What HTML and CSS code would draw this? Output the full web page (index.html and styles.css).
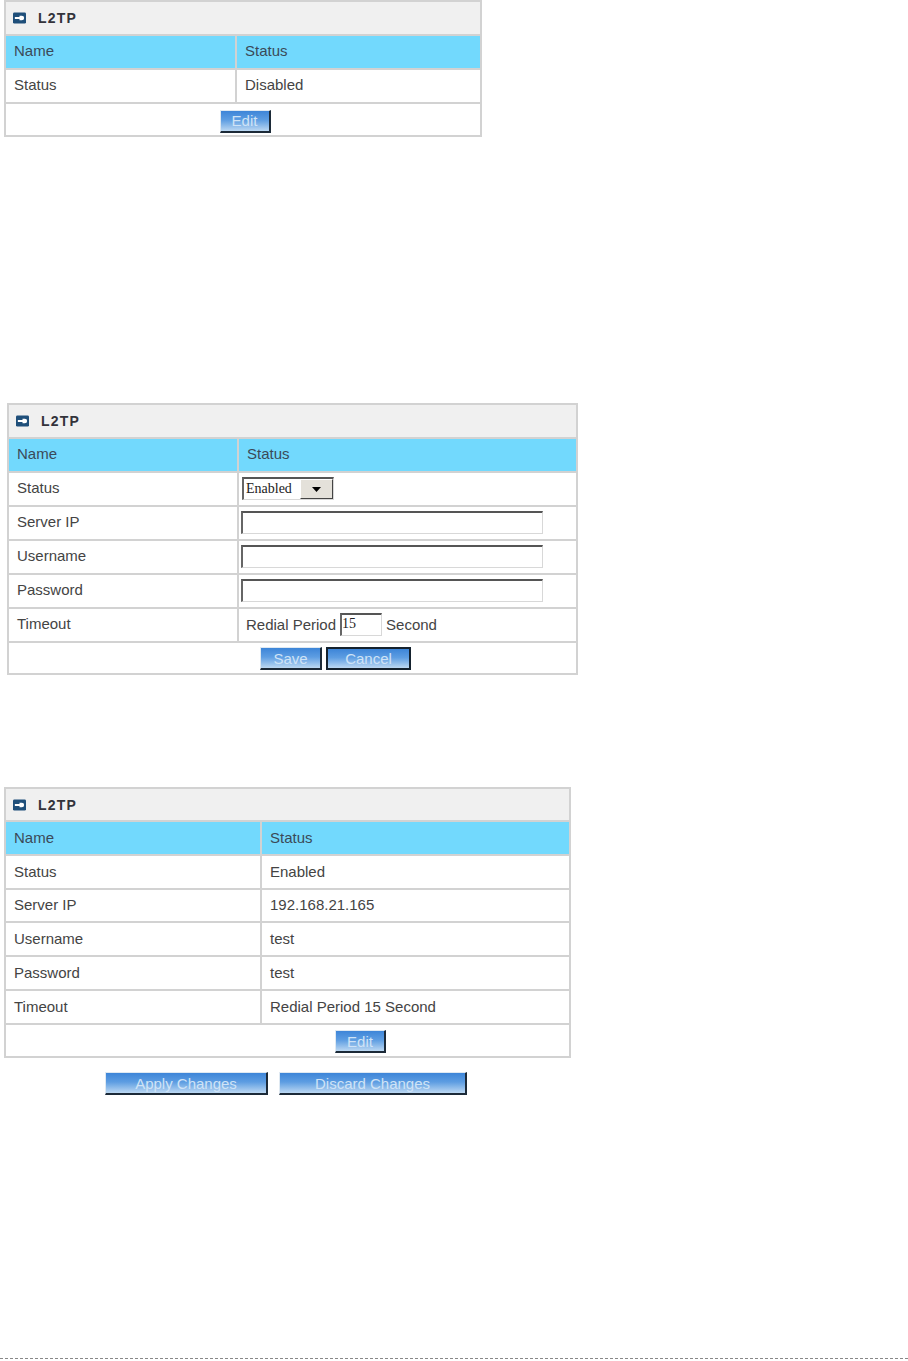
FILE: index.html
```html
<!DOCTYPE html>
<html lang="en">
<head>
<meta charset="utf-8">
<title>L2TP</title>
<link rel="stylesheet" href="styles.css">
</head>
<body>
<main class="page">
  <table class="panel panel-a">
    <colgroup><col class="col-name"><col></colgroup>
    <tr><td class="title" colspan="2"><span class="title-in"><svg class="icon" viewBox="0 0 14 12"><rect width="14" height="12" rx="1.5" fill="#1f4f7a"/><path d="M2 5h5V3.5h2.5a2.5 2.5 0 0 1 0 5H7V7H2z" fill="#fff"/></svg>L2TP</span></td></tr>
    <tr class="head"><td class="first">Name</td><td>Status</td></tr>
    <tr><td class="first">Status</td><td>Disabled</td></tr>
    <tr><td class="center" colspan="2"><button class="btn btn-edit" type="button">Edit</button></td></tr>
  </table>

  <table class="panel panel-b">
    <colgroup><col class="col-name"><col></colgroup>
    <tr><td class="title" colspan="2"><span class="title-in"><svg class="icon" viewBox="0 0 14 12"><rect width="14" height="12" rx="1.5" fill="#1f4f7a"/><path d="M2 5h5V3.5h2.5a2.5 2.5 0 0 1 0 5H7V7H2z" fill="#fff"/></svg>L2TP</span></td></tr>
    <tr class="head"><td class="first">Name</td><td>Status</td></tr>
    <tr><td class="first">Status</td><td class="field"><span class="select-wrap"><select class="select"><option>Enabled</option></select><span class="select-arrow"><svg viewBox="0 0 9 5" class="arrow"><path d="M0 0h9L4.5 5z" fill="#000"/></svg></span></span></td></tr>
    <tr><td class="first">Server IP</td><td class="field"><input class="input" type="text"></td></tr>
    <tr><td class="first">Username</td><td class="field"><input class="input" type="text"></td></tr>
    <tr><td class="first">Password</td><td class="field"><input class="input" type="text"></td></tr>
    <tr><td class="first">Timeout</td><td class="timeout"><span class="timeout-in">Redial Period <input class="input input-short" type="text" value="15"> Second</span></td></tr>
    <tr><td class="center" colspan="2"><span class="btn-row"><button class="btn btn-save" type="button">Save</button><button class="btn btn-cancel" type="button">Cancel</button></span></td></tr>
  </table>

  <table class="panel panel-c">
    <colgroup><col class="col-name"><col></colgroup>
    <tr class="row-short"><td class="title" colspan="2"><span class="title-in"><svg class="icon" viewBox="0 0 14 12"><rect width="14" height="12" rx="1.5" fill="#1f4f7a"/><path d="M2 5h5V3.5h2.5a2.5 2.5 0 0 1 0 5H7V7H2z" fill="#fff"/></svg>L2TP</span></td></tr>
    <tr class="head"><td class="first">Name</td><td>Status</td></tr>
    <tr><td class="first">Status</td><td>Enabled</td></tr>
    <tr class="row-short"><td class="first">Server IP</td><td>192.168.21.165</td></tr>
    <tr><td class="first">Username</td><td>test</td></tr>
    <tr><td class="first">Password</td><td>test</td></tr>
    <tr><td class="first">Timeout</td><td>Redial Period 15 Second</td></tr>
    <tr><td class="center" colspan="2"><button class="btn btn-edit" type="button">Edit</button></td></tr>
  </table>

  <div class="actions">
    <button class="btn btn-apply" type="button">Apply Changes</button>
    <button class="btn btn-discard" type="button">Discard Changes</button>
  </div>
</main>
<footer class="footer"></footer>
</body>
</html>
```
FILE: styles.css
```css
* { box-sizing: border-box; }
html, body { margin: 0; padding: 0; }
body {
  height: 1361px;
  display: flex;
  flex-direction: column;
  background: #fff;
  color: #444;
  font-family: "Liberation Sans", Arial, sans-serif;
  font-size: 15px;
  overflow: hidden;
}
.page { flex: 1; display: flex; flex-direction: column; align-items: flex-start; }
.panel {
  border-collapse: separate;
  border-spacing: 0;
  table-layout: fixed;
  border: 2px solid #d2d2d2;
  background: #fff;
}
.panel-a { width: 478px; margin-left: 4px; }
.panel-a .col-name { width: 231px; }
.panel-b { width: 571px; margin-left: 7px; margin-top: 266px; }
.panel-b .col-name { width: 230px; }
.panel-c { width: 567px; margin-left: 4px; margin-top: 112px; }
.panel-c .col-name { width: 256px; }
.panel td {
  height: 34px;
  padding: 0 0 2px 8px;
  border-bottom: 2px solid #d2d2d2;
  vertical-align: middle;
  line-height: 17px;
  white-space: nowrap;
}
.panel-a td, .panel-b td { padding-bottom: 4px; }
.panel .row-short td { height: 33px; }
.panel tr:last-child td { border-bottom: 0; height: 31px; padding: 0; }
.panel td.first { border-right: 2px solid #d2d2d2; }
.panel td.title { background: #f0f0f0; padding: 0 0 0 7px; }
.panel-c td.title { padding-top: 1px; }
.title-in {
  display: flex;
  align-items: center;
  gap: 12px;
  font-size: 14px;
  font-weight: bold;
  letter-spacing: 1.2px;
  color: #33333b;
}
.icon { width: 13px; height: 12px; flex: none; }
.head td { background: #72d9fd; color: #3b4a58; }
.panel tr:last-child td.center { text-align: center; }
.panel-a tr:last-child td.center { padding: 3px 0 0 4px; }
.panel-b tr:last-child td.center { height: 30px; padding: 1px 0 0 86px; }
.panel-c tr:last-child td.center { padding: 2px 0 0 146px; }
.panel td.field { padding: 0 0 1px 2px; }
.panel td.timeout { padding: 0 0 1px 7px; }
.timeout-in { display: flex; align-items: center; gap: 4px; }
.input {
  display: block;
  width: 302px;
  height: 23px;
  padding: 0 2px;
  background: #fff;
  border-width: 2px 1px 1px 2px;
  border-style: solid;
  border-color: #555 #d8d8d8 #d8d8d8 #666;
  font-family: "Liberation Serif", "Times New Roman", serif;
  font-size: 14px;
  color: #222;
  outline: none;
}
.input-short { width: 42px; flex: none; padding: 0 0 2px 0; }
.select-wrap { position: relative; display: block; width: 92px; height: 23px; margin-left: 1px; }
.select {
  display: block;
  width: 100%;
  height: 100%;
  appearance: none;
  padding: 0 0 2px 2px;
  border-width: 2px 1px 1px 2px;
  border-style: solid;
  border-color: #555 #d8d8d8 #d8d8d8 #666;
  border-radius: 0;
  background: #fff;
  font-family: "Liberation Serif", "Times New Roman", serif;
  font-size: 14px;
  color: #222;
}
.select-arrow {
  position: absolute;
  top: 2px;
  right: 1px;
  width: 33px;
  height: 20px;
  display: flex;
  align-items: center;
  justify-content: center;
  background: #e4e1da;
  border: 1px solid;
  border-color: #fff #444 #444 #fff;
  pointer-events: none;
}
.arrow { width: 9px; height: 5px; }
.btn {
  height: 23px;
  padding: 0;
  background: linear-gradient(#3d85d8, #5d9de2 45%, #bcd8f2);
  border-width: 1px 2px 2px 1px;
  border-style: solid;
  border-color: #dfe9f2 #1c2a38 #1c2a38 #dfe9f2;
  color: #cfe3f6;
  font-family: "Liberation Sans", Arial, sans-serif;
  font-size: 15px;
  line-height: 19px;
}
.btn-edit { display: inline-block; width: 51px; vertical-align: middle; }
.btn-row { display: flex; justify-content: center; gap: 4px; }
.btn-save { width: 62px; }
.btn-cancel { width: 85px; border: 2px solid #15222e; }
.actions { display: flex; gap: 11px; margin: 14px 0 0 105px; }
.btn-apply { width: 163px; }
.btn-discard { width: 188px; }
.footer { height: 3px; border-top: 1px dashed #888; }
```
